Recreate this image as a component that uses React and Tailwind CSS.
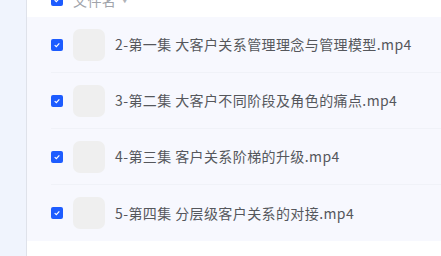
const files = [
  "2-第一集 大客户关系管理理念与管理模型.mp4",
  "3-第二集 大客户不同阶段及角色的痛点.mp4",
  "4-第三集 客户关系阶梯的升级.mp4",
  "5-第四集 分层级客户关系的对接.mp4",
];

const Check = () => (
  <span className="flex h-3 w-3 shrink-0 items-center justify-center rounded-[2px] bg-[#1d5cff]">
    <svg viewBox="0 0 12 12" className="h-2 w-2">
      <path d="M2.5 6.2 L5 8.5 L9.5 3.5" fill="none" stroke="white" strokeWidth="1.8" />
    </svg>
  </span>
);

const App = () => {
  return (
    <div
      className="flex h-[256px] w-[441px] overflow-hidden bg-white"
      style={{ fontFamily: '"Noto Sans CJK SC", "Noto Sans", sans-serif' }}
    >
      <aside className="w-[27px] shrink-0 border-r border-r-[#dfe2ea] bg-[#f0f4fd]" />
      <main className="flex-1 -mt-[17px]">
        <div className="flex h-[34px] items-center pl-6">
          <Check />
          <span className="ml-[10px] text-[14px] tracking-[0.4px] text-[#a0a3aa]">文件名</span>
          <span className="ml-1 text-[9px] text-[#b0b3b8]">▼</span>
        </div>
        <div className="bg-[#f7f8fe]">
          {files.map((name, index) => {
            return (
              <div
                key={index}
                className="ml-6 flex h-[56px] items-center border-b border-b-[#f0f2f8] last:border-b-0"
              >
                <Check />
                <div className="ml-[10px] h-8 w-8 shrink-0 rounded-[7px] bg-[#efefef]" />
                <span className="ml-[10px] whitespace-nowrap text-[14px] tracking-[0.4px] text-[#55575c]">
                  {name}
                </span>
              </div>
            );
          })}
        </div>
      </main>
    </div>
  );
};

export default App;
